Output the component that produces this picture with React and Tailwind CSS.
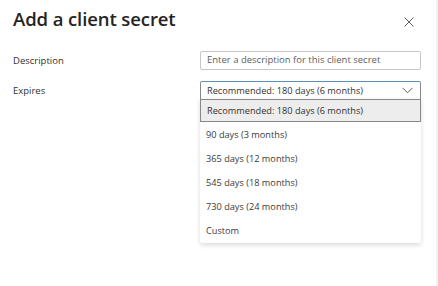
import React from 'react';

const options = [
  '90 days (3 months)',
  '365 days (12 months)',
  '545 days (18 months)',
  '730 days (24 months)',
  'Custom',
];

export default function App() {
  return (
    <div
      className="w-[438px] h-[286px] bg-white relative overflow-hidden text-[#323130]"
      style={{ fontFamily: '"Open Sans", "Noto Sans", sans-serif' }}
    >
      <div className="absolute right-0 top-0 h-full w-[2px] bg-[#f3f3f3]" />
      {/* header */}
      <div className="flex items-start justify-between pl-[13px] pr-[24px] pt-[5px]">
        <h1 className="text-[18.5px] leading-[28px] font-semibold tracking-[-0.1px] text-[#252423]">
          Add a client secret
        </h1>
        <svg width="10" height="10" viewBox="0 0 10 10" className="mt-[12px]">
          <path d="M0.5 0.5L9.5 9.5M9.5 0.5L0.5 9.5" stroke="#605e5c" strokeWidth="1" />
        </svg>
      </div>

      {/* form */}
      <div className="flex flex-col gap-[11px] mt-[18px] pl-[13px] pr-[17px]">
        <div className="flex items-center">
          <div className="w-[187px] text-[9.5px] pt-[1px]">Description</div>
          <div className="flex-1 h-[19px] border border-[#c8c6c4] rounded-[2px] px-[6px] flex items-center text-[9.5px] text-[#605e5c]">
            Enter a description for this client secret
          </div>
        </div>
        <div className="flex items-start">
          <div className="w-[187px] text-[9.5px] leading-[18px] pt-[1px]">Expires</div>
          <div className="flex-1 relative">
            <div className="h-[18px] border border-[#8a8886] border-b-0 border-t-[#5b8fb9] rounded-t-[2px] px-[6px] flex items-center justify-between text-[9.2px] text-[#323130]">
              <span>Recommended: 180 days (6 months)</span>
              <svg width="11" height="7" viewBox="0 0 11 7" className="mr-[1px]">
                <path d="M0.5 0.8L5.5 5.8L10.5 0.8" fill="none" stroke="#605e5c" strokeWidth="1" />
              </svg>
            </div>
            <div className="bg-white shadow-[0_2px_5px_rgba(0,0,0,0.15)] rounded-b-[2px]">
              <div className="h-[23px] bg-[#ededed] border border-[#8a8886] px-[6px] flex items-center text-[9.2px]">
                Recommended: 180 days (6 months)
              </div>
              <div className="flex flex-col pb-[1px]">
                {options.map((o) => (
                  <div key={o} className="h-[24px] px-[6px] pt-[2px] flex items-center text-[9.2px] text-[#3b3a39]">
                    {o}
                  </div>
                ))}
              </div>
            </div>
          </div>
        </div>
      </div>
    </div>
  );
}
